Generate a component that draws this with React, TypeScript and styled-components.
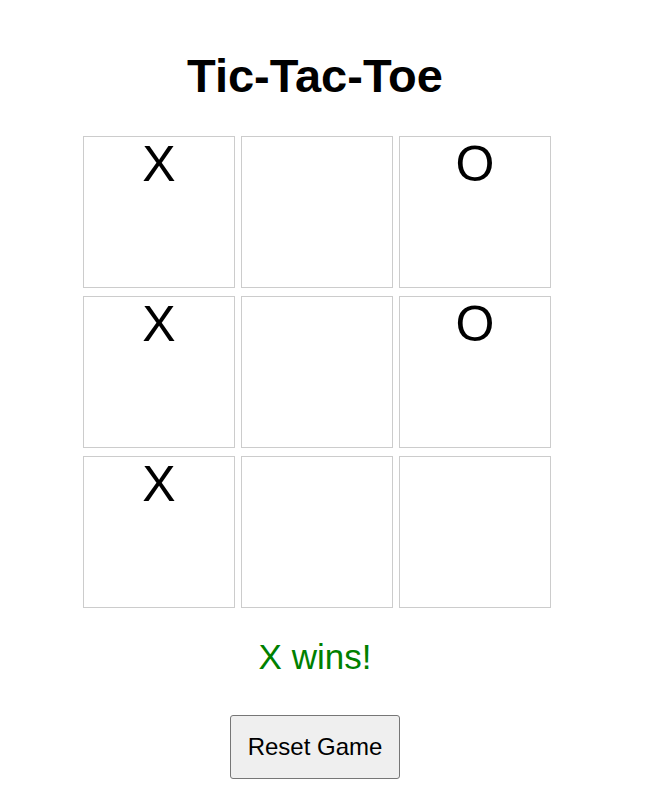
import React, { useState } from "react";
import styled, { createGlobalStyle } from "styled-components";

type Mark = "X" | "O" | null;

const LINES = [
  [0, 1, 2],
  [3, 4, 5],
  [6, 7, 8],
  [0, 3, 6],
  [1, 4, 7],
  [2, 5, 8],
  [0, 4, 8],
  [2, 4, 6],
];

const START: Mark[] = ["X", null, "O", "X", null, "O", "X", null, null];

function getWinner(cells: Mark[]) {
  for (const [a, b, c] of LINES) {
    if (cells[a] && cells[a] === cells[b] && cells[a] === cells[c]) return cells[a];
  }
  return null;
}

function App() {
  const [cells, setCells] = useState<Mark[]>(START);
  const [next, setNext] = useState<"X" | "O">("O");
  const winner = getWinner(cells);

  const handleClick = (index: number) => {
    if (winner || cells[index]) return;
    const copy = [...cells];
    copy[index] = next;
    setCells(copy);
    setNext(next === "X" ? "O" : "X");
  };

  const reset = () => {
    setCells(Array(9).fill(null));
    setNext("X");
  };

  return (
    <>
      <GlobalStyle />
      <Page>
        <Title>Tic-Tac-Toe</Title>
        <Board>
          {cells.map((cell, i) => (
            <Cell key={i} onClick={() => handleClick(i)}>
              {cell}
            </Cell>
          ))}
        </Board>
        <Status>{winner ? `${winner} wins!` : `Next: ${next}`}</Status>
        <ResetButton onClick={reset}>Reset Game</ResetButton>
      </Page>
    </>
  );
}

export default App;

const GlobalStyle = createGlobalStyle`
  body {
    margin: 0;
    background: #fff;
    font-family: "Liberation Sans", Arial, sans-serif;
  }
`;

const Page = styled.div`
  width: 630px;
  padding-top: 50px;
  display: flex;
  flex-direction: column;
  align-items: center;
  text-align: center;
`;

const Title = styled.h1`
  margin: 0;
  font-size: 47px;
  font-weight: bold;
  line-height: 52px;
  color: #000;
`;

const Board = styled.div`
  display: grid;
  grid-template-columns: repeat(3, 152px);
  grid-auto-rows: 152px;
  column-gap: 6px;
  row-gap: 8px;
  margin-top: 34px;
  margin-left: 4px;
`;

const Cell = styled.div`
  box-sizing: border-box;
  border: 1px solid #cccccc;
  font-size: 50px;
  line-height: 54px;
  color: #000;
  text-align: center;
  cursor: pointer;
`;

const Status = styled.p`
  margin: 29px 0 0;
  font-size: 35px;
  line-height: 40px;
  color: green;
`;

const ResetButton = styled.button`
  margin-top: 38px;
  padding: 17px 17px 18px;
  font-family: "Liberation Sans", Arial, sans-serif;
  font-size: 24px;
  line-height: 27px;
  color: #000;
  background: #efefef;
  border: 1px solid #767676;
  border-radius: 3px;
  cursor: pointer;
`;
